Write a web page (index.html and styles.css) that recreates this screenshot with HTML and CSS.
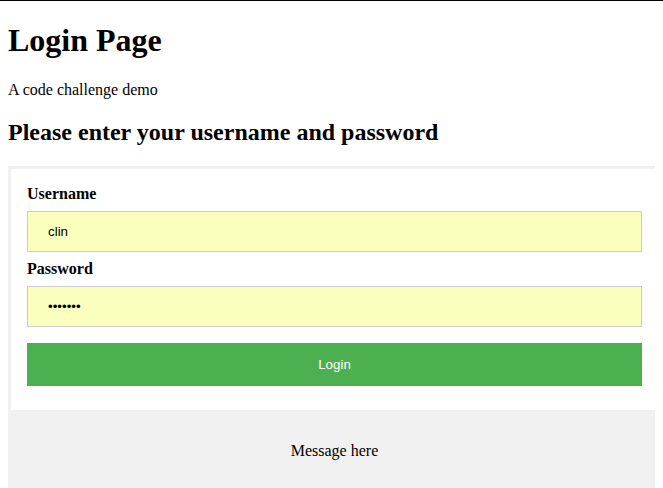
FILE: index.html
```html
<!DOCTYPE html>
<html>
<head>
<meta charset="utf-8">
<title>Login Page</title>
<link rel="stylesheet" href="styles.css">
</head>
<body>
<h1>Login Page</h1>
<p>A code challenge demo</p>
<h2>Please enter your username and password</h2>
<div class="panel">
  <form class="login-form">
    <label class="field-label" for="uname">Username</label>
    <input class="field-input" id="uname" type="text" value="clin">
    <label class="field-label" for="psw">Password</label>
    <input class="field-input" id="psw" type="password" value="1234567">
    <button class="login-btn" type="button">Login</button>
  </form>
  <div class="message">Message here</div>
</div>
</body>
</html>
```
FILE: styles.css
```css
html {
  border-top: 1px solid #000;
}
body {
  margin: 0 8px 8px;
  font-family: "Liberation Serif", "Times New Roman", serif;
  color: #000;
}
.panel {
  width: 100%;
  border: 3px solid #f1f1f1;
  border-bottom: none;
  background: #f1f1f1;
}
.login-form {
  display: flex;
  flex-direction: column;
  background: #fff;
  padding: 16px;
  margin: 0;
}
.field-label {
  font-weight: bold;
  font-size: 16px;
}
.field-input {
  box-sizing: border-box;
  width: 100%;
  margin: 8px 0;
  padding: 12px 20px;
  border: 1px solid #ccc;
  background: #faffbd;
  font-family: "Liberation Sans", Arial, sans-serif;
  font-size: 13.333px;
  color: #000;
}
.login-btn {
  width: 100%;
  margin: 8px 0;
  padding: 14px 20px;
  border: none;
  background: #4caf50;
  color: #fff;
  font-family: "Liberation Sans", Arial, sans-serif;
  font-size: 13.333px;
}
.message {
  text-align: center;
  padding: 32px 0;
  font-size: 16px;
}
```
